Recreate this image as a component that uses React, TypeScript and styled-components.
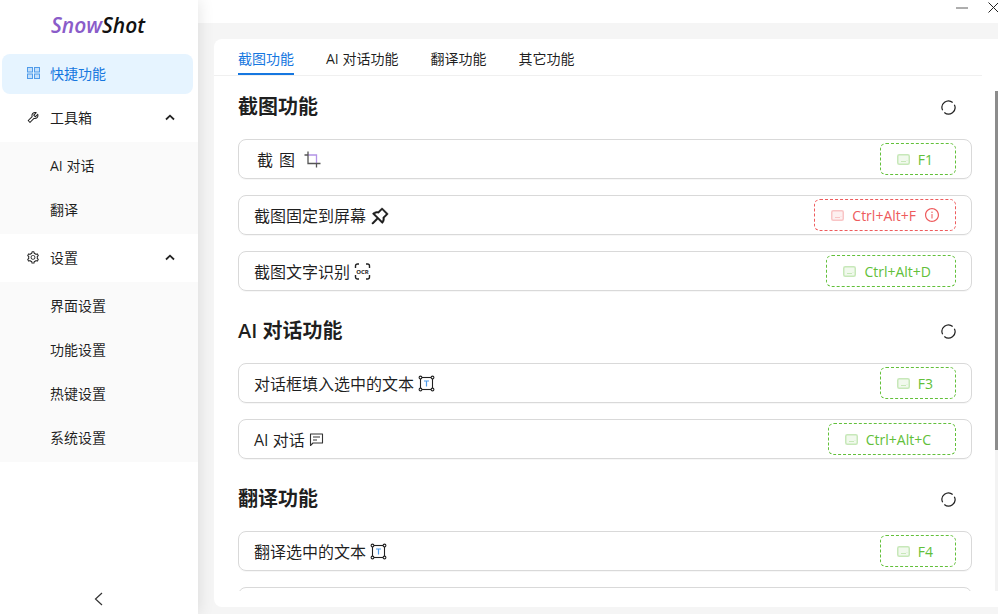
import React from 'react'
import styled, { createGlobalStyle } from 'styled-components'
import { AiOutlinePushpin, AiOutlineSetting, AiOutlineTool, AiOutlineInfoCircle } from 'react-icons/ai'

const GlobalStyle = createGlobalStyle`
	html, body, #root {
		margin: 0;
		height: 100%;
		overflow: hidden;
	}
	body {
		font-family: "Open Sans", "Noto Sans CJK SC", sans-serif;
		font-size: 14px;
		color: rgba(0, 0, 0, 0.88);
		background: #f5f5f5;
	}
`

const Layout = styled.div`
	display: flex;
	height: 100%;
`

const Sider = styled.aside`
	position: relative;
	z-index: 1;
	display: flex;
	flex-direction: column;
	flex: 0 0 198px;
	background: #fff;
	box-shadow: 0 0 16px rgba(0, 0, 0, 0.12);
`

const Logo = styled.div`
	display: flex;
	justify-content: center;
	align-items: center;
	height: 50px;
	margin-bottom: 4px;
	padding-right: 2px;
	box-sizing: border-box;
	font-size: 21px;
	font-weight: 600;
	font-style: italic;
	color: #111;
`

const LogoAccent = styled.span`
	color: #8a5cc9;
`

const MenuItem = styled.div<{ $active?: boolean; $sub?: boolean }>`
	display: flex;
	align-items: center;
	gap: 10px;
	height: 40px;
	box-sizing: border-box;
	margin: 0 5px 4px 2px;
	padding: 0 18px 2px ${props => (props.$sub ? '48px' : '24px')};
	border-radius: 8px;
	color: ${props => (props.$active ? '#1677e0' : 'rgba(0, 0, 0, 0.88)')};
	background: ${props => (props.$active ? '#e6f4ff' : 'transparent')};
`

const MenuIcon = styled.span`
	display: flex;
	justify-content: center;
	width: 14px;
	font-size: 17px;
`

const Chevron = styled.svg`
	margin-left: auto;
`

const SubMenu = styled.div`
	padding-top: 4px;
	margin-bottom: 4px;
	background: #fafafa;
`

const Collapse = styled.div`
	display: flex;
	justify-content: center;
	align-items: center;
	height: 30px;
	margin-top: auto;
	padding-right: 2px;
`

const Main = styled.main`
	display: flex;
	flex-direction: column;
	flex: 1;
	min-width: 0;
`

const TitleBar = styled.header`
	display: flex;
	justify-content: flex-end;
	align-items: center;
	gap: 20px;
	height: 23px;
	padding: 0 0 8px;
	box-sizing: border-box;
	background: #fff;
`

const Card = styled.section`
	position: relative;
	display: flex;
	flex-direction: column;
	height: 568px;
	margin: 16px 0 0 16px;
	padding-bottom: 16px;
	box-sizing: border-box;
	border-radius: 8px 0 0 8px;
	background: #fff;
`

const TabBar = styled.nav`
	display: flex;
	gap: 32px;
	flex: 0 0 36px;
	box-sizing: border-box;
	margin: 0 16px 16px 0;
	padding-left: 24px;
	border-bottom: 1px solid #f0f0f0;
`

const Tab = styled.div<{ $active?: boolean }>`
	height: 36px;
	padding-top: 9px;
	box-sizing: border-box;
	line-height: 22px;
	color: ${props => (props.$active ? '#1677e0' : 'rgba(0, 0, 0, 0.88)')};
	border-bottom: 2px solid ${props => (props.$active ? '#1677e0' : 'transparent')};
`

const Scroller = styled.div`
	flex: 1;
	min-height: 0;
	overflow: hidden;
	padding: 1px 26px 0 24px;
`

const ScrollTrack = styled.div`
	position: absolute;
	top: 52px;
	right: 0;
	bottom: 16px;
	width: 3px;
	background: #f3f3f3;
`

const ScrollThumb = styled.div`
	height: 359px;
	background: #8c8c8c;
`

const Section = styled.div`
	margin-bottom: 26px;
`

const SectionHeader = styled.div`
	display: flex;
	justify-content: space-between;
	align-items: center;
	height: 28px;
	margin-bottom: 18px;
	padding-right: 16px;
`

const SectionTitle = styled.h2`
	margin: 0;
	font-size: 20px;
	font-weight: 600;
	line-height: 28px;
`

const Row = styled.div`
	display: flex;
	justify-content: space-between;
	align-items: center;
	height: 40px;
	box-sizing: border-box;
	padding: 0 15px;
	border: 1px solid #d9d9d9;
	border-radius: 8px;
	box-shadow: 0 1px 0 rgba(0, 0, 0, 0.03);
	& + & {
		margin-top: 16px;
	}
`

const RowLabel = styled.div`
	display: flex;
	align-items: center;
	gap: 4px;
	font-size: 16px;
	line-height: 22px;
	padding-top: 1px;
`

const SpacedLabel = styled(RowLabel)`
	gap: 3px;
	padding-left: 3px;
	letter-spacing: 6px;
`

const PinIcon = styled(AiOutlinePushpin)`
	margin: 0 -1px;
	stroke: currentColor;
	stroke-width: 20px;
`

const HotKey = styled.div<{ $invalid?: boolean; $compact?: boolean }>`
	display: flex;
	align-items: center;
	gap: 8px;
	height: 32px;
	box-sizing: border-box;
	padding: 0 ${props => (props.$invalid ? '15px' : props.$compact ? '22px' : '24px')} 0 16px;
	border: 1px dashed ${props => (props.$invalid ? '#ee5b5d' : '#62c03a')};
	border-radius: 6px;
	color: ${props => (props.$invalid ? '#ee5b5d' : '#62c03a')};
`

const KeyboardIcon = () => (
	<svg width="13" height="11" viewBox="0 0 13 11" fill="none" style={{ opacity: 0.35 }}>
		<rect x="0.75" y="0.75" width="11.5" height="9.5" rx="1.5" fill="currentColor" fillOpacity="0.25" stroke="currentColor" strokeWidth="1.5" />
		<path d="M4 7.5H9M10 6.5V7" stroke="currentColor" strokeWidth="1" />
	</svg>
)

const RefreshIcon = () => (
	<svg width="15" height="15" viewBox="0 0 15 15" fill="none" stroke="#222" strokeWidth="1.2">
		<path d="M13.39 4.75A6.5 6.5 0 0 1 3.32 12.48" />
		<path d="M1.61 10.25A6.5 6.5 0 0 1 11.68 2.52" />
	</svg>
)

const GridIcon = () => (
	<svg width="13" height="12" viewBox="0 0 13 12" fill="#c4dffa" stroke="#4f9bea" strokeWidth="1">
		<rect x="0.5" y="0.5" width="5" height="4.5" />
		<rect x="7.5" y="0.5" width="5" height="4.5" />
		<rect x="0.5" y="7" width="5" height="4.5" />
		<rect x="7.5" y="7" width="5" height="4.5" />
	</svg>
)

const UpIcon = () => (
	<Chevron width="10" height="7" viewBox="0 0 10 7" fill="none" stroke="#222" strokeWidth="1.8">
		<path d="M1 5.5L5 1.7L9 5.5" />
	</Chevron>
)

const CropIcon = () => (
	<svg width="17" height="17" viewBox="0 0 17 17" fill="none" strokeWidth="1.3">
		<path d="M4 4H12.5V12" stroke="#b394e6" />
		<path d="M0.5 4H4M4 0.5V12.5H16.5M12.5 12.5V16.5" stroke="#555" />
	</svg>
)

const OcrIcon = () => (
	<svg width="17" height="17" viewBox="0 0 17 17" fill="none" stroke="#222" strokeWidth="1.4">
		<path d="M5 1H3.5A2 2 0 0 0 1.5 3V5M12 1H13.5A2 2 0 0 1 15.5 3V5M5 16H3.5A2 2 0 0 1 1.5 14V12M12 16H13.5A2 2 0 0 0 15.5 14V12" />
		<text x="8.5" y="10.5" fontSize="6" fontWeight="700" textAnchor="middle" fill="#222" stroke="none" fontFamily="Open Sans" letterSpacing="0">OCR</text>
	</svg>
)

const TextBoxIcon = () => (
	<svg width="17" height="17" viewBox="0 0 17 17" fill="none" stroke="#222" strokeWidth="1.1">
		<rect x="2.5" y="2.5" width="12" height="12" />
		<circle cx="2.5" cy="2.5" r="1.4" fill="#fff" />
		<circle cx="14.5" cy="2.5" r="1.4" fill="#fff" />
		<circle cx="2.5" cy="14.5" r="1.4" fill="#fff" />
		<circle cx="14.5" cy="14.5" r="1.4" fill="#fff" />
		<path d="M6 6H11M8.5 6V11.5" stroke="#4f9bea" strokeWidth="1.2" />
	</svg>
)

const ChatIcon = () => (
	<svg width="15" height="14" viewBox="0 0 15 14" fill="none" stroke="#333" strokeWidth="1.1">
		<path d="M1.5 1H13.5V10H4L1.5 12.5Z" strokeLinejoin="round" />
		<path d="M4 4H11M4 7H8" />
	</svg>
)

const Shortcut = ({ keys, invalid }: { keys: string; invalid?: boolean }) => (
	<HotKey $invalid={invalid} $compact={keys.length < 3}>
		<KeyboardIcon />
		<span>{keys}</span>
		{invalid && <AiOutlineInfoCircle size={16} />}
	</HotKey>
)

const App = () => (
	<Layout>
		<GlobalStyle />
		<Sider>
			<Logo><LogoAccent>Snow</LogoAccent>Shot</Logo>
			<MenuItem $active><MenuIcon><GridIcon /></MenuIcon>快捷功能</MenuItem>
			<MenuItem><MenuIcon><AiOutlineTool /></MenuIcon>工具箱<UpIcon /></MenuItem>
			<SubMenu>
				<MenuItem $sub>AI 对话</MenuItem>
				<MenuItem $sub>翻译</MenuItem>
			</SubMenu>
			<MenuItem><MenuIcon><AiOutlineSetting /></MenuIcon>设置<UpIcon /></MenuItem>
			<SubMenu>
				<MenuItem $sub>界面设置</MenuItem>
				<MenuItem $sub>功能设置</MenuItem>
				<MenuItem $sub>热键设置</MenuItem>
				<MenuItem $sub>系统设置</MenuItem>
			</SubMenu>
			<Collapse>
				<svg width="11" height="14" viewBox="0 0 11 14" fill="none" stroke="#333" strokeWidth="1.2">
					<path d="M9 1L2.5 7L9 13" />
				</svg>
			</Collapse>
		</Sider>
		<Main>
			<TitleBar>
				<svg width="12" height="2" viewBox="0 0 12 2"><path d="M0 1H12" stroke="#777" strokeWidth="1.2" /></svg>
				<svg width="11" height="11" viewBox="0 0 11 11" style={{ marginRight: -1 }}><path d="M0.5 0.5L10.5 10.5M10.5 0.5L0.5 10.5" stroke="#222" strokeWidth="1" /></svg>
			</TitleBar>
			<Card>
				<TabBar>
					<Tab $active>截图功能</Tab>
					<Tab>AI 对话功能</Tab>
					<Tab>翻译功能</Tab>
					<Tab>其它功能</Tab>
				</TabBar>
				<Scroller>
					<Section>
						<SectionHeader><SectionTitle>截图功能</SectionTitle><RefreshIcon /></SectionHeader>
						<Row><SpacedLabel>截图<CropIcon /></SpacedLabel><Shortcut keys="F1" /></Row>
						<Row><RowLabel>截图固定到屏幕<PinIcon size={22} /></RowLabel><Shortcut keys="Ctrl+Alt+F" invalid /></Row>
						<Row><RowLabel>截图文字识别<OcrIcon /></RowLabel><Shortcut keys="Ctrl+Alt+D" /></Row>
					</Section>
					<Section>
						<SectionHeader><SectionTitle>AI 对话功能</SectionTitle><RefreshIcon /></SectionHeader>
						<Row><RowLabel>对话框填入选中的文本<TextBoxIcon /></RowLabel><Shortcut keys="F3" /></Row>
						<Row><RowLabel>AI 对话<ChatIcon /></RowLabel><Shortcut keys="Ctrl+Alt+C" /></Row>
					</Section>
					<Section>
						<SectionHeader><SectionTitle>翻译功能</SectionTitle><RefreshIcon /></SectionHeader>
						<Row><RowLabel>翻译选中的文本<TextBoxIcon /></RowLabel><Shortcut keys="F4" /></Row>
						<Row />
					</Section>
				</Scroller>
				<ScrollTrack><ScrollThumb /></ScrollTrack>
			</Card>
		</Main>
	</Layout>
)

export default App
